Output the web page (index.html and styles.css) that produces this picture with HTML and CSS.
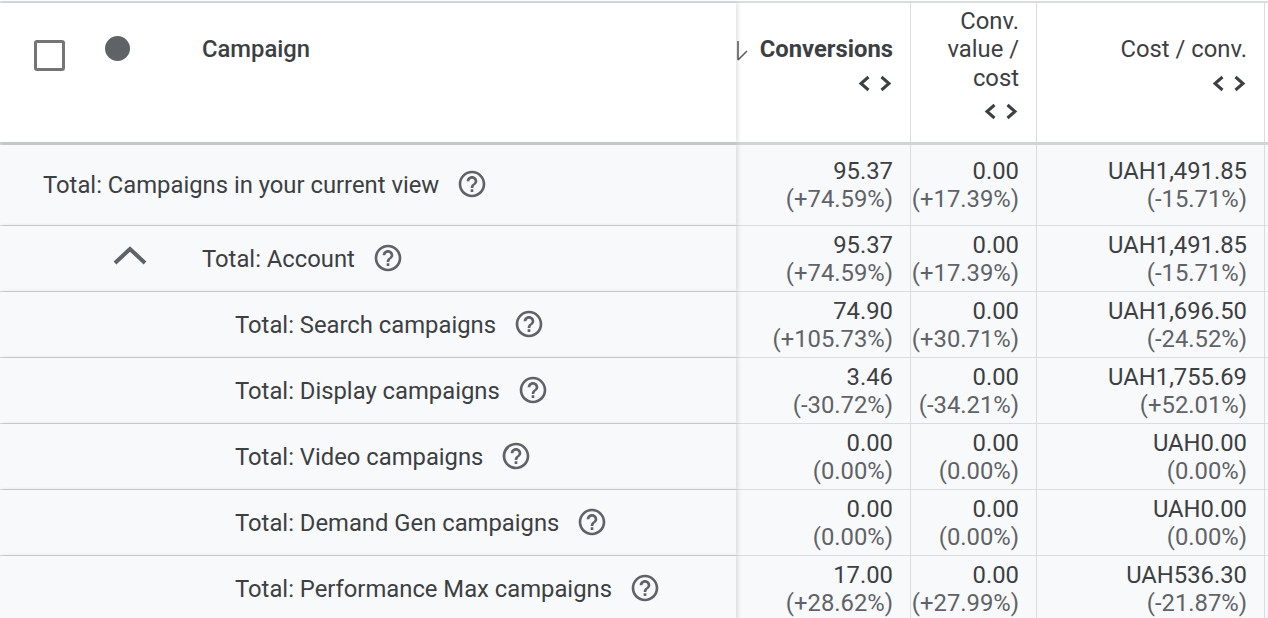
FILE: index.html
```html
<!DOCTYPE html>
<html>
<head>
<meta charset="utf-8">
<link rel="stylesheet" href="styles.css">
</head>
<body>
<div class="table">
  <div class="row head">
    <div class="cell name-head">
      <span class="checkbox"></span>
      <span class="dot"></span>
      <span class="head-title">Campaign</span>
    </div>
    <div class="cell num-head">
      <div class="head-label sorted">
        <svg class="sort-arrow" width="22" height="24" viewBox="0 0 22 24"><path d="M2 2 V21 M2 21 L11 12" fill="none" stroke="#5f6368" stroke-width="1.6"/></svg>
        <span class="bold">Conversions</span>
      </div>
      <svg class="chev" width="36" height="17" viewBox="0 0 36 17"><path d="M11.5 2 L4 8.5 L11.5 15 M24.5 2 L32 8.5 L24.5 15" fill="none" stroke="#3c4043" stroke-width="3"/></svg>
    </div>
    <div class="cell num-head">
      <div class="head-label">Conv.<br>value /<br>cost</div>
      <svg class="chev" width="36" height="17" viewBox="0 0 36 17"><path d="M11.5 2 L4 8.5 L11.5 15 M24.5 2 L32 8.5 L24.5 15" fill="none" stroke="#3c4043" stroke-width="3"/></svg>
    </div>
    <div class="cell num-head">
      <div class="head-label">Cost / conv.</div>
      <svg class="chev" width="36" height="17" viewBox="0 0 36 17"><path d="M11.5 2 L4 8.5 L11.5 15 M24.5 2 L32 8.5 L24.5 15" fill="none" stroke="#3c4043" stroke-width="3"/></svg>
    </div>
    <div class="cell filler"></div>
  </div>

  <div class="row body first">
    <div class="cell name lvl0">
      <span class="label">Total: Campaigns in your current view</span>
      <svg class="help" width="32" height="32" viewBox="0 0 24 24"><path fill="#5f6368" d="M11 18h2v-2h-2v2zm1-16C6.48 2 2 6.48 2 12s4.48 10 10 10 10-4.48 10-10S17.52 2 12 2zm0 18c-4.41 0-8-3.59-8-8s3.59-8 8-8 8 3.59 8 8-3.59 8-8 8zm0-14c-2.21 0-4 1.79-4 4h2c0-1.1.9-2 2-2s2 .9 2 2c0 2-3 1.75-3 5h2c0-2.25 3-2.5 3-5 0-2.21-1.79-4-4-4z"/></svg>
    </div>
    <div class="cell num"><span>95.37</span><span class="pct">(+74.59%)</span></div>
    <div class="cell num"><span>0.00</span><span class="pct">(+17.39%)</span></div>
    <div class="cell num"><span>UAH1,491.85</span><span class="pct">(-15.71%)</span></div>
    <div class="cell filler"></div>
  </div>

  <div class="row body">
    <div class="cell name lvl1">
      <svg class="collapse" width="34" height="20" viewBox="0 0 34 20"><path d="M2 17 L17 3 L32 17" fill="none" stroke="#5f6368" stroke-width="4"/></svg>
      <span class="label">Total: Account</span>
      <svg class="help" width="32" height="32" viewBox="0 0 24 24"><path fill="#5f6368" d="M11 18h2v-2h-2v2zm1-16C6.48 2 2 6.48 2 12s4.48 10 10 10 10-4.48 10-10S17.52 2 12 2zm0 18c-4.41 0-8-3.59-8-8s3.59-8 8-8 8 3.59 8 8-3.59 8-8 8zm0-14c-2.21 0-4 1.79-4 4h2c0-1.1.9-2 2-2s2 .9 2 2c0 2-3 1.75-3 5h2c0-2.25 3-2.5 3-5 0-2.21-1.79-4-4-4z"/></svg>
    </div>
    <div class="cell num"><span>95.37</span><span class="pct">(+74.59%)</span></div>
    <div class="cell num"><span>0.00</span><span class="pct">(+17.39%)</span></div>
    <div class="cell num"><span>UAH1,491.85</span><span class="pct">(-15.71%)</span></div>
    <div class="cell filler"></div>
  </div>

  <div class="row body">
    <div class="cell name lvl2">
      <span class="label">Total: Search campaigns</span>
      <svg class="help" width="32" height="32" viewBox="0 0 24 24"><path fill="#5f6368" d="M11 18h2v-2h-2v2zm1-16C6.48 2 2 6.48 2 12s4.48 10 10 10 10-4.48 10-10S17.52 2 12 2zm0 18c-4.41 0-8-3.59-8-8s3.59-8 8-8 8 3.59 8 8-3.59 8-8 8zm0-14c-2.21 0-4 1.79-4 4h2c0-1.1.9-2 2-2s2 .9 2 2c0 2-3 1.75-3 5h2c0-2.25 3-2.5 3-5 0-2.21-1.79-4-4-4z"/></svg>
    </div>
    <div class="cell num"><span>74.90</span><span class="pct">(+105.73%)</span></div>
    <div class="cell num"><span>0.00</span><span class="pct">(+30.71%)</span></div>
    <div class="cell num"><span>UAH1,696.50</span><span class="pct">(-24.52%)</span></div>
    <div class="cell filler"></div>
  </div>

  <div class="row body">
    <div class="cell name lvl2">
      <span class="label">Total: Display campaigns</span>
      <svg class="help" width="32" height="32" viewBox="0 0 24 24"><path fill="#5f6368" d="M11 18h2v-2h-2v2zm1-16C6.48 2 2 6.48 2 12s4.48 10 10 10 10-4.48 10-10S17.52 2 12 2zm0 18c-4.41 0-8-3.59-8-8s3.59-8 8-8 8 3.59 8 8-3.59 8-8 8zm0-14c-2.21 0-4 1.79-4 4h2c0-1.1.9-2 2-2s2 .9 2 2c0 2-3 1.75-3 5h2c0-2.25 3-2.5 3-5 0-2.21-1.79-4-4-4z"/></svg>
    </div>
    <div class="cell num"><span>3.46</span><span class="pct">(-30.72%)</span></div>
    <div class="cell num"><span>0.00</span><span class="pct">(-34.21%)</span></div>
    <div class="cell num"><span>UAH1,755.69</span><span class="pct">(+52.01%)</span></div>
    <div class="cell filler"></div>
  </div>

  <div class="row body">
    <div class="cell name lvl2">
      <span class="label">Total: Video campaigns</span>
      <svg class="help" width="32" height="32" viewBox="0 0 24 24"><path fill="#5f6368" d="M11 18h2v-2h-2v2zm1-16C6.48 2 2 6.48 2 12s4.48 10 10 10 10-4.48 10-10S17.52 2 12 2zm0 18c-4.41 0-8-3.59-8-8s3.59-8 8-8 8 3.59 8 8-3.59 8-8 8zm0-14c-2.21 0-4 1.79-4 4h2c0-1.1.9-2 2-2s2 .9 2 2c0 2-3 1.75-3 5h2c0-2.25 3-2.5 3-5 0-2.21-1.79-4-4-4z"/></svg>
    </div>
    <div class="cell num"><span>0.00</span><span class="pct">(0.00%)</span></div>
    <div class="cell num"><span>0.00</span><span class="pct">(0.00%)</span></div>
    <div class="cell num"><span>UAH0.00</span><span class="pct">(0.00%)</span></div>
    <div class="cell filler"></div>
  </div>

  <div class="row body">
    <div class="cell name lvl2">
      <span class="label">Total: Demand Gen campaigns</span>
      <svg class="help" width="32" height="32" viewBox="0 0 24 24"><path fill="#5f6368" d="M11 18h2v-2h-2v2zm1-16C6.48 2 2 6.48 2 12s4.48 10 10 10 10-4.48 10-10S17.52 2 12 2zm0 18c-4.41 0-8-3.59-8-8s3.59-8 8-8 8 3.59 8 8-3.59 8-8 8zm0-14c-2.21 0-4 1.79-4 4h2c0-1.1.9-2 2-2s2 .9 2 2c0 2-3 1.75-3 5h2c0-2.25 3-2.5 3-5 0-2.21-1.79-4-4-4z"/></svg>
    </div>
    <div class="cell num"><span>0.00</span><span class="pct">(0.00%)</span></div>
    <div class="cell num"><span>0.00</span><span class="pct">(0.00%)</span></div>
    <div class="cell num"><span>UAH0.00</span><span class="pct">(0.00%)</span></div>
    <div class="cell filler"></div>
  </div>

  <div class="row body">
    <div class="cell name lvl2">
      <span class="label">Total: Performance Max campaigns</span>
      <svg class="help" width="32" height="32" viewBox="0 0 24 24"><path fill="#5f6368" d="M11 18h2v-2h-2v2zm1-16C6.48 2 2 6.48 2 12s4.48 10 10 10 10-4.48 10-10S17.52 2 12 2zm0 18c-4.41 0-8-3.59-8-8s3.59-8 8-8 8 3.59 8 8-3.59 8-8 8zm0-14c-2.21 0-4 1.79-4 4h2c0-1.1.9-2 2-2s2 .9 2 2c0 2-3 1.75-3 5h2c0-2.25 3-2.5 3-5 0-2.21-1.79-4-4-4z"/></svg>
    </div>
    <div class="cell num"><span>17.00</span><span class="pct">(+28.62%)</span></div>
    <div class="cell num"><span>0.00</span><span class="pct">(+27.99%)</span></div>
    <div class="cell num"><span>UAH536.30</span><span class="pct">(-21.87%)</span></div>
    <div class="cell filler"></div>
  </div>
</div>
</body>
</html>
```
FILE: styles.css
```css
* { box-sizing: border-box; }
html, body { margin: 0; padding: 0; background: #ffffff; }
body {
  font-family: Roboto, "Liberation Sans", sans-serif;
  font-size: 23.8px;
  color: #3c4043;
  overflow: hidden;
  padding-top: 1px;
}
.table {
  border-top: 2px solid #dadce0;
  width: 1268px;
}
.row {
  display: grid;
  grid-template-columns: 736px 175px 126px 228px 3px;
}
.cell {
  border-right: 1px solid #dadce0;
}
.cell.filler { border-right: none; }
.row .cell:first-child {
  border-right: none;
  position: relative;
  z-index: 1;
  box-shadow: 2px 0 4px rgba(0, 0, 0, 0.12);
}

/* header */
.row.head {
  height: 142px;
  border-bottom: 3px solid #d2d3d5;
  background: #ffffff;
}
.head .cell { background: #fff; }
.name-head {
  display: flex;
  align-items: flex-start;
  padding-top: 28px;
}
.checkbox {
  width: 31px;
  height: 31px;
  border: 3px solid #757575;
  border-radius: 3px;
  margin-left: 34px;
  margin-top: 9px;
}
.dot {
  width: 25px;
  height: 25px;
  border-radius: 50%;
  background: #5f6368;
  margin-left: 40px;
  margin-top: 5px;
}
.head-title {
  font-weight: 500;
  margin-left: 72px;
  line-height: 36px;
}
.num-head {
  display: flex;
  flex-direction: column;
  align-items: flex-end;
  justify-content: center;
  padding: 0 17px 18px 0;
  text-align: right;
  line-height: 28.5px;
}
.head-label.sorted {
  display: flex;
  align-items: center;
  gap: 2px;
}
.sort-arrow { margin-top: 2px; }
.bold { font-weight: 700; color: #3c4043; }
.chev { margin-top: 11px; margin-right: 0; }

/* body */
.row.body {
  height: 66px;
  border-bottom: 1px solid #dadce0;
  background: #f8f9fa;
}
.row.body.first { height: 81px; }
.body .cell { background: #f8f9fa; }
.name {
  display: flex;
  align-items: center;
}
.lvl0 { padding-left: 43px; }
.lvl1 { padding-left: 113px; }
.lvl2 { padding-left: 235px; }
.collapse { margin-right: 55px; margin-top: -6px; }
.help { margin-left: 17px; margin-top: -2px; }
.num {
  display: flex;
  flex-direction: column;
  align-items: flex-end;
  justify-content: center;
  padding-right: 17px;
  line-height: 28px;
  white-space: nowrap;
}
.pct { color: #5f6368; }
```
